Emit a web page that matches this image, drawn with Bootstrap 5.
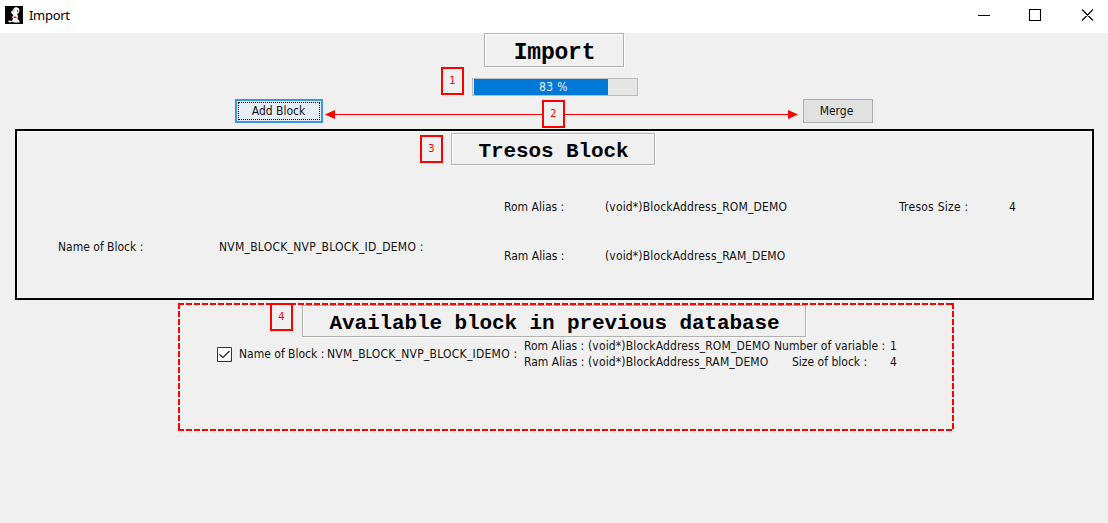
<!DOCTYPE html>
<html lang="en">
<head>
<meta charset="utf-8">
<meta name="viewport" content="width=device-width, initial-scale=1">
<title>Import</title>
<link href="https://cdn.jsdelivr.net/npm/bootstrap@5.3.0/dist/css/bootstrap.min.css" rel="stylesheet">
<style>
body{background:#f0f0f0;color:#111;font:12px/16px "DejaVu Sans Condensed","DejaVu Sans",sans-serif;font-stretch:condensed;overflow:hidden;white-space:nowrap}
.titlebar{height:33px;padding-left:5px;font:13px/18px "Noto Sans",sans-serif;letter-spacing:-.3px;color:#000}
.app-icon{margin-top:6px}
.app-name{margin:6px 0 0 6px}
.heading{border:1px solid #b0b0b0;box-shadow:inset 1px 1px #fff,1px 1px #fff;font-family:"Liberation Mono",monospace;font-weight:700;color:#000;margin:0}
.h-import{width:140px;height:34px;font-size:23px;letter-spacing:-.2px;padding:6px 0 0 1px}
.h-tresos{width:204px;height:32px;font-size:21px;letter-spacing:-.1px;padding:5px 0 0 1px}
.h-avail{width:504px;height:32px;font-size:21px;letter-spacing:-.1px;padding:5px 0 0 1px;margin:2px 0 0 9px}
.tag{width:23px;height:28px;border:2px solid #f00;color:#f00;font-size:11px;background:#f0f0f0}
.meter{width:166px;height:18px;border:1px solid #bcbcbc;background:#e6e6e6;padding:0 1px;margin:11px 0 0 8px}
.meter .progress-bar{background:#0078d7}
.meter-text{color:#e8f0fa;line-height:16px;letter-spacing:.4px;padding-right:3px}
.push{height:24px;border-radius:0;border:1px solid #adadad;background:#e1e1e1;padding:0;font-size:12px;line-height:20px;color:#111;margin-top:1px}
.push-main{width:88px;border:2px solid #3a96dd;background:#e5edf7;outline:1px dotted #000;outline-offset:-4px;padding-right:1px}
.push-merge{width:70px;padding-right:3px}
.tresos{margin:0 14px 0 15px;height:171px;border:2px solid #000;box-shadow:inset 0 0 0 1px #fafafa}
.fields{display:grid;grid-template-columns:161px 285px 101px 294px 110px auto;padding-left:41px;grid-template-rows:24px 25px 24px;margin-top:30px;align-items:center}
.name-cell{grid-row:2/4;align-self:start;padding-top:20px}
.ls-id{letter-spacing:.25px}
.ls-addr{letter-spacing:.15px}
.avail{width:776px;height:128px;margin:3px 0 0 178px}
.found{padding:1px 0 0 39px}
.check{width:15px;height:15px}
.pairs{display:grid;grid-template-columns:64px 186px 116px auto}
</style>
</head>
<body>
<header class="titlebar bg-white d-flex align-items-start">
  <svg class="app-icon flex-shrink-0" width="18" height="18" viewBox="0 0 18 18"><rect width="18" height="18" fill="#050505"/><path d="M9 2 11 1l2.500 1L14.500 4 14 6.500 12 8l1 2-.5 3 2 2v1.500H9L7 15.500l-2 1-2-1 1-1 3 .5 1-2.500-1-1.500 1.500-2L7 8 6 6 8 4z" fill="#fff"/><path d="M8.500 10.500h3v1.500h-3z" fill="#d22"/><path d="M12 4h1v2h-1zM8.500 4.500h1v1h-1z" fill="#666"/></svg>
  <span class="app-name">Import</span>
  <svg class="ms-auto" width="130" height="33" fill="none" stroke="#000" stroke-width="1.1"><path d="M0 15.500h12M51.500 9.500h11v11h-11zM104 9.500l11 11M115 9.500l-11 11"/></svg>
</header>
<main>
  <div class="d-flex justify-content-center"><h1 class="heading h-import text-center">Import</h1></div>
  <div class="d-flex" style="padding-left:441px;height:31px">
    <div class="tag d-flex align-items-center justify-content-center">1</div>
    <div class="meter position-relative">
      <div class="progress-bar h-100" style="width:83%"></div>
      <span class="meter-text position-absolute top-0 start-0 w-100 text-center">83 %</span>
    </div>
  </div>
  <div class="d-flex" style="padding-left:235px;height:31px">
    <button class="btn push push-main">Add Block</button>
    <svg width="219" height="24"><path d="M10 16.500h209" stroke="red"/><path d="M2 16.500l10-4.500v9z" fill="red"/></svg>
    <div class="tag d-flex align-items-center justify-content-center" style="margin-top:2px">2</div>
    <svg width="238" height="24"><path d="M0 16.500h226" stroke="red"/><path d="M233 16.500l-10-4.500v9z" fill="red"/></svg>
    <button class="btn push push-merge">Merge</button>
  </div>
  <section class="tresos">
    <div class="d-flex" style="padding:2px 0 0 403px">
      <div class="tag d-flex align-items-center justify-content-center" style="margin:2px 8px 0 0">3</div>
      <h2 class="heading h-tresos text-center">Tresos Block</h2>
    </div>
    <div class="fields">
      <span style="grid-area:1/3">Rom Alias :</span><span class="ls-addr" style="grid-area:1/4">(void*)BlockAddress_ROM_DEMO</span><span class="ls-id" style="grid-area:1/5">Tresos Size :</span><span style="grid-area:1/6">4</span>
      <span class="name-cell" style="grid-column:1">Name of Block :</span><span class="name-cell ls-id" style="grid-column:2">NVM_BLOCK_NVP_BLOCK_ID_DEMO :</span>
      <span style="grid-area:3/3">Ram Alias :</span><span class="ls-addr" style="grid-area:3/4">(void*)BlockAddress_RAM_DEMO</span>
    </div>
  </section>
  <section class="avail position-relative">
    <svg class="position-absolute top-0 start-0" width="776" height="128" fill="none" stroke="#f00" stroke-width="2" stroke-dasharray="6 2"><path d="M0 1h776M1 0v128M0 127h776M775 0v128"/></svg>
    <div class="d-flex" style="padding-left:92px">
      <div class="tag d-flex align-items-center justify-content-center">4</div>
      <h2 class="heading h-avail text-center">Available block in previous database</h2>
    </div>
    <div class="found d-flex align-items-center">
      <svg class="check" viewBox="0 0 15 15"><path d="M.5.5h14v14H.5z" fill="#fff" stroke="#333"/><path d="M2.500 7.500l3.500 3 6.500-6.500" fill="none" stroke="#222" stroke-width="1.200"/></svg>
      <span style="width:88px;margin-left:7px">Name of Block :</span>
      <span class="ls-id" style="width:197px">NVM_BLOCK_NVP_BLOCK_IDEMO :</span>
      <div class="pairs"><span>Rom Alias :</span><span class="ls-addr">(void*)BlockAddress_ROM_DEMO</span><span>Number of variable :</span><span>1</span><span>Ram Alias :</span><span class="ls-addr">(void*)BlockAddress_RAM_DEMO</span><span style="padding-left:18px">Size of block :</span><span>4</span></div>
    </div>
  </section>
</main>
<script src="https://cdn.jsdelivr.net/npm/bootstrap@5.3.0/dist/js/bootstrap.bundle.min.js"></script>
</body>
</html>
